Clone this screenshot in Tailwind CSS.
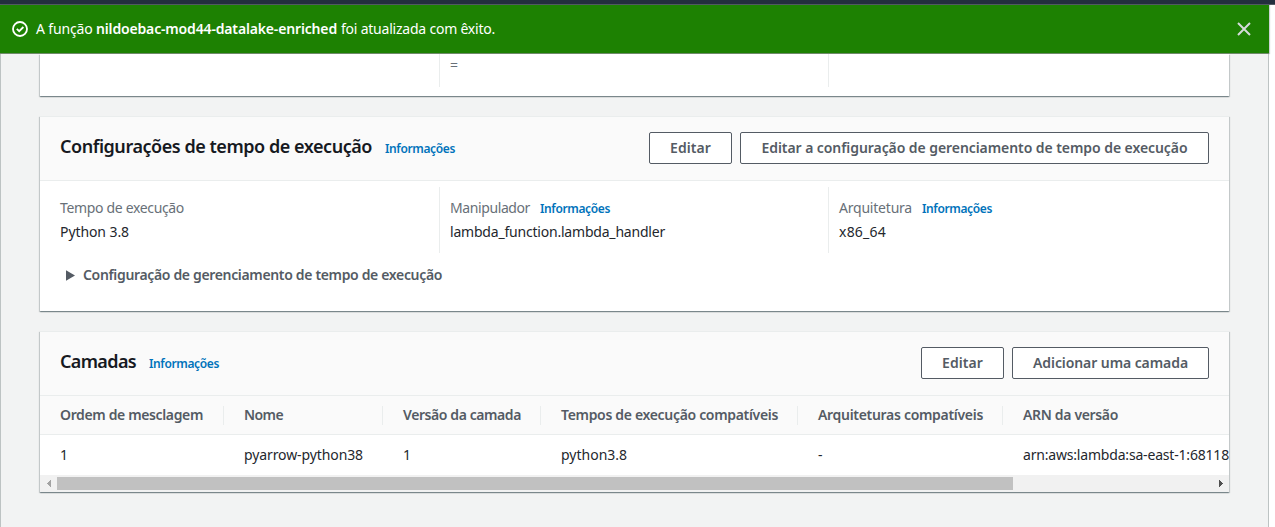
<!DOCTYPE html>
<html lang="pt-BR">
<head>
<meta charset="utf-8">
<title>Lambda</title>
<script src="https://cdn.jsdelivr.net/npm/@tailwindcss/browser@4"></script>
</head>
<body class="h-[527px] overflow-hidden bg-white font-['Noto_Sans',sans-serif] text-sm leading-[22px] text-[#24272d]">
<div class="h-1 bg-[#232f3e]"></div>
<div class="h-px bg-[#545b64]"></div>

<!-- Success notification -->
<div class="flex h-[49px] w-[1269px] items-center border-b border-[#6f8a6a] bg-[#1d8102] pr-[18px] pl-3 text-white shadow-[1px_0_1px_rgba(0,28,36,0.2)]">
  <svg class="size-4 shrink-0" viewBox="0 0 16 16" fill="none" stroke="#fff" stroke-width="1.8"><circle cx="8" cy="8" r="7"/><path d="M4.800 7.800l2.400 2.400 4.200-4.200"/></svg>
  <p class="ml-2 flex grow gap-1 whitespace-pre"><span class="w-14 tracking-[-0.15px]">A função</span><b class="w-[241px] font-semibold tracking-[-0.158px]">nildoebac-mod44-datalake-enriched</b><span class="tracking-[-0.222px]">foi atualizada com êxito.</span></p>
  <svg class="size-[14px]" viewBox="0 0 14 14" fill="none" stroke="#d5dbdb" stroke-width="2"><path d="M1 1l12 12M13 1L1 13"/></svg>
</div>

<main class="flex h-[473px] w-[1269px] flex-col gap-5 border-x border-[#bdc3c3] bg-[#f2f3f3] px-[39px]">
  <section class="h-[42px] shrink-0 bg-white shadow-[0_1px_1px_0_rgba(0,28,36,0.3),1px_1px_1px_0_rgba(0,28,36,0.15),-1px_1px_1px_0_rgba(0,28,36,0.15)]">
    <div class="flex h-[33px]">
      <div class="w-[400px] border-r border-[#eaeded]"></div>
      <div class="w-[389px] border-r border-[#eaeded] pl-[10px] text-[#687078]">=</div>
    </div>
  </section>

  <!-- Runtime settings -->
  <section class="h-[195px] shrink-0 border-t border-[#eaeded] bg-white shadow-[0_1px_1px_0_rgba(0,28,36,0.3),1px_1px_1px_0_rgba(0,28,36,0.15),-1px_1px_1px_0_rgba(0,28,36,0.15)]">
    <header class="flex h-16 items-center border-b border-[#eaeded] bg-[#fafafa] px-5 pb-0.5">
      <h2 class="w-[325px] pb-[3px] text-lg font-semibold whitespace-nowrap tracking-[-0.457px] text-[#16191f]">Configurações de tempo de execução</h2>
      <a class="mt-0.5 grow text-xs font-semibold tracking-[-0.37px] text-[#0073bb]">Informações</a>
      <div class="flex gap-2 font-semibold text-[#545b64]">
        <button class="h-8 w-[83px] rounded-[2px] border border-[#545b64] bg-white tracking-[0.085px]">Editar</button>
        <button class="h-8 w-[469px] rounded-[2px] border border-[#545b64] bg-white tracking-[-0.069px]">Editar a configuração de gerenciamento de tempo de execução</button>
      </div>
    </header>
    <div class="mt-[6px] flex h-[66px] whitespace-nowrap">
      <div class="w-[400px] border-r border-[#eaeded] pt-[10px] pl-5">
        <p class="tracking-[-0.336px] text-[#687078]">Tempo de execução</p>
        <p class="mt-0.5 tracking-[-0.085px]">Python 3.8</p>
      </div>
      <div class="w-[389px] border-r border-[#eaeded] pt-[10px] pl-[10px]">
        <p class="flex"><span class="w-[90px] tracking-[-0.401px] text-[#687078]">Manipulador</span><a class="pt-px text-xs leading-[21px] font-semibold tracking-[-0.37px] text-[#0073bb]">Informações</a></p>
        <p class="mt-0.5 tracking-[-0.204px]">lambda_function.lambda_handler</p>
      </div>
      <div class="pt-[10px] pl-[10px]">
        <p class="flex"><span class="w-[83px] tracking-[-0.212px] text-[#687078]">Arquitetura</span><a class="pt-px text-xs leading-[21px] font-semibold tracking-[-0.37px] text-[#0073bb]">Informações</a></p>
        <p class="mt-0.5 tracking-[0.224px]">x86_64</p>
      </div>
    </div>
    <div class="mt-[11px] flex items-center pl-[26px] font-semibold text-[#545b64]">
      <svg class="h-[11px] w-[9px]" viewBox="0 0 9 11" fill="#545b64"><path d="M0 .3l9 5.200-9 5.200z"/></svg>
      <span class="ml-2 tracking-[-0.34px]">Configuração de gerenciamento de tempo de execução</span>
    </div>
  </section>

  <!-- Layers -->
  <section class="h-[161px] shrink-0 overflow-hidden border-t border-[#eaeded] bg-white shadow-[0_1px_1px_0_rgba(0,28,36,0.3),1px_1px_1px_0_rgba(0,28,36,0.15),-1px_1px_1px_0_rgba(0,28,36,0.15)]">
    <header class="flex h-16 items-center border-b border-[#eaeded] bg-[#fafafa] px-5 pb-0.5">
      <h2 class="w-[89px] pb-[3px] text-lg font-semibold tracking-[-0.642px] text-[#16191f]">Camadas</h2>
      <a class="mt-0.5 grow text-xs font-semibold tracking-[-0.37px] text-[#0073bb]">Informações</a>
      <div class="flex gap-2 font-semibold text-[#545b64]">
        <button class="h-8 w-[83px] rounded-[2px] border border-[#545b64] bg-white tracking-[0.085px]">Editar</button>
        <button class="h-8 w-[197px] rounded-[2px] border border-[#545b64] bg-white tracking-[-0.08px]">Adicionar uma camada</button>
      </div>
    </header>
    <div class="flex h-[39px] items-center border-b border-[#eaeded] bg-[#fafafa] leading-[17px] font-semibold whitespace-nowrap text-[#545b64] *:pb-0.5">
      <div class="w-[184px] border-r border-[#eaeded] pl-5 tracking-[-0.364px]">Ordem de mesclagem</div>
      <div class="w-[159px] border-r border-[#eaeded] pl-5 tracking-[-0.592px]">Nome</div>
      <div class="w-[158px] border-r border-[#eaeded] pl-5 tracking-[-0.412px]">Versão da camada</div>
      <div class="w-[257px] border-r border-[#eaeded] pl-5 tracking-[-0.323px]">Tempos de execução compatíveis</div>
      <div class="w-[205px] border-r border-[#eaeded] pl-5 tracking-[-0.304px]">Arquiteturas compatíveis</div>
      <div class="pl-5 tracking-[-0.338px]">ARN da versão</div>
    </div>
    <div class="flex h-[40px] items-center overflow-hidden whitespace-nowrap">
      <div class="w-[184px] shrink-0 pl-5">1</div>
      <div class="w-[159px] shrink-0 pl-5 tracking-[-0.101px]">pyarrow-python38</div>
      <div class="w-[158px] shrink-0 pl-5">1</div>
      <div class="w-[257px] shrink-0 pl-5">python3.8</div>
      <div class="w-[205px] shrink-0 pl-5">-</div>
      <div class="shrink-0 pl-5 tracking-[-0.187px]">arn:aws:lambda:sa-east-1:68118</div>
    </div>
    <div class="flex h-[17px] items-center bg-[#f1f1f1]">
      <div class="flex w-[17px] justify-center"><svg class="h-[7px] w-1" viewBox="0 0 4 7" fill="#a3a3a3" shape-rendering="crispEdges"><path d="M4 0v7L0 3.500z"/></svg></div>
      <div class="h-[13px] w-[956px] bg-[#c1c1c1]"></div>
      <div class="ml-auto flex w-[17px] justify-center"><svg class="h-[7px] w-1" viewBox="0 0 4 7" fill="#505050" shape-rendering="crispEdges"><path d="M0 0v7l4-3.500z"/></svg></div>
    </div>
  </section>
</main>
</body>
</html>
